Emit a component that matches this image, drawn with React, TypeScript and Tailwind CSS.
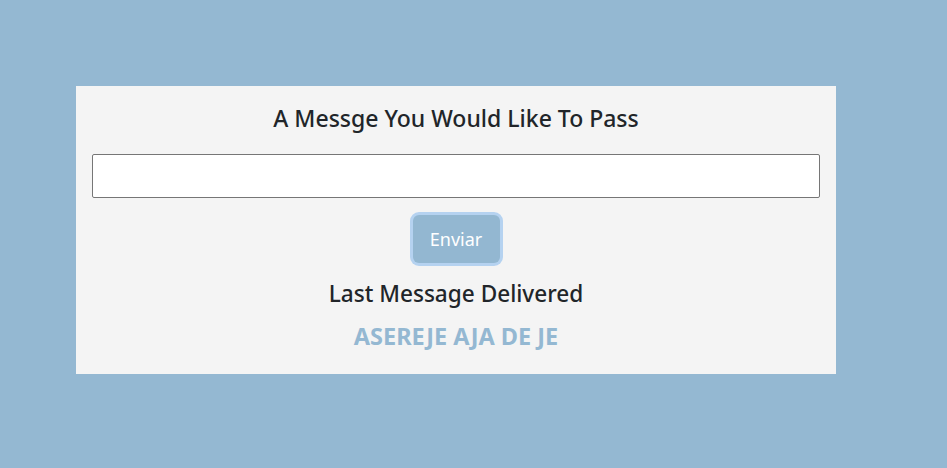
import { useState } from "react";

const App = () => {
  const [message, setMessage] = useState("");
  const [last] = useState("ASEREJE AJA DE JE");

  return (
    <div
      className="min-h-screen w-full bg-[#94b8d2] pt-[86px] pl-[76px]"
      style={{ fontFamily: '"Noto Sans", "Open Sans", sans-serif' }}
    >
      <div className="w-[760px] h-[288px] bg-[#f4f4f4] px-4 pt-4 flex flex-col items-center">
        <h2 className="text-[23px] leading-[33px] font-medium text-[#212529]">
          A Messge You Would Like To Pass
        </h2>
        <input
          type="text"
          value={message}
          onChange={(e) => setMessage(e.target.value)}
          className="mt-[19px] w-full h-[44px] bg-white border border-[#767676] rounded-[2px] px-2 outline-none"
        />
        <button
          type="button"
          className="mt-[17px] w-[87px] h-[48px] rounded-[6px] bg-[#93b7d1] text-white text-[18px] ring-[3px] ring-[#b5d2f0]"
        >
          Enviar
        </button>
        <h3 className="mt-[14px] text-[22.6px] leading-[33px] font-medium text-[#212529]">
          Last Message Delivered
        </h3>
        <p className="mt-[11px] text-[23.5px] leading-[30px] font-bold text-[#94b8d2]">
          {last}
        </p>
      </div>
    </div>
  );
};

export default App;
